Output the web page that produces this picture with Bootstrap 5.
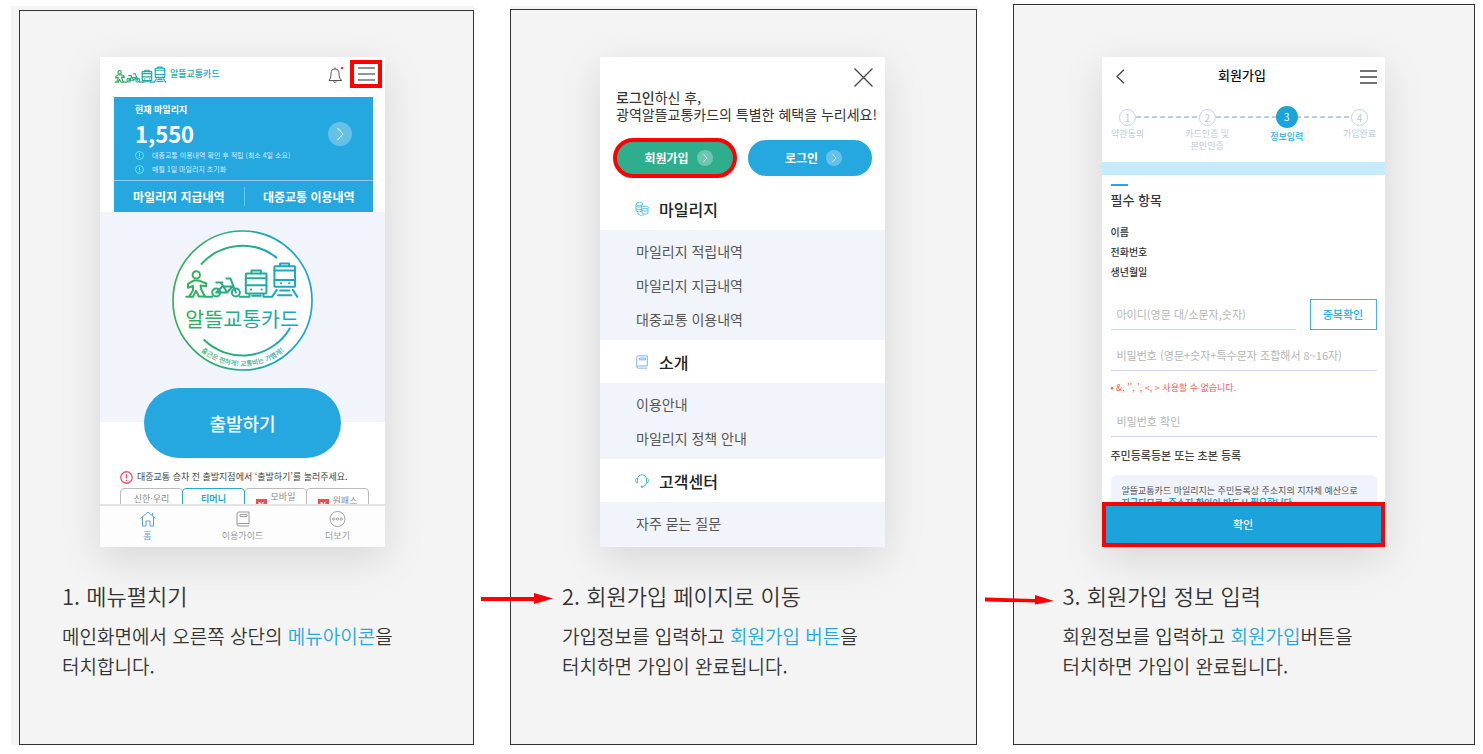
<!DOCTYPE html>
<html lang="ko">
<head>
<meta charset="utf-8">
<meta name="viewport" content="width=device-width, initial-scale=1">
<title>알뜰교통카드 회원가입 안내</title>
<link rel="stylesheet" href="https://cdn.jsdelivr.net/npm/bootstrap@5.3.0/dist/css/bootstrap.min.css">
<style>
:root{--sky:#25a7e0;--hot:#f00;--mist:#f1f4fa}
body{font-family:"Noto Sans CJK KR","Noto Sans",sans-serif;color:#333;background:#fff}
button,input{font-family:inherit}
a{text-decoration:none}
.guide{display:grid;grid-template-columns:463fr 467fr 462fr;gap:36px;padding:6px 8px 8px 11px}
.step-panel{position:relative;background:#f4f4f4;padding:51px 0 64px}
.step-panel::before{content:"";position:absolute;inset:3px 0 0;border:1px solid #333;pointer-events:none}
.step-panel.first::before{left:8px;top:4px}
.step-panel.last::before{top:-2px}
.step-panel + .step-panel{padding-right:2px}
.step-body{width:361px;max-width:100%}
.phone{width:285px;height:490px;background:#fff;overflow:hidden;box-shadow:0 12px 40px rgba(0,0,0,.12)}
.phone.form-screen{width:283px}
.phone button{border:0;padding:0;background:none;line-height:1}
.step-title{font-size:22px;line-height:33px;font-weight:350;margin:32px 0 9px}
.step-text{font-size:19px;line-height:30px;font-weight:350;margin:0;white-space:nowrap}
.step-text a{color:var(--sky)}
.flow-arrow{position:absolute;left:-29px;top:586px;z-index:2}
/* home screen */
.home-head{height:40px;padding:0 3px 0 14px}
.home-head .hot-box{border:4px solid var(--hot);width:32px;height:28px;margin:0 0 6px 6px}
.home-head .bell{margin-bottom:6px}
.brand{margin-bottom:4px}
.point-card{background:var(--sky);color:#fff;margin:0 12px 0 14px}
.point-main{padding:5px 21px 6px;height:84px;border-bottom:1px solid #8fd0ef}
.point-main h3{font-size:9px;line-height:16px;font-weight:700;margin:0}
.point-main strong{font-size:22px;line-height:30px;display:block}
.point-main li{font-size:7px;line-height:14px;color:#d2eefb;white-space:nowrap}
.point-links{height:31px}
.point-links a{color:#fff;font-size:12px;font-weight:700;line-height:19px}
.point-links a + a{border-left:1px solid #6cc3ea}
.hero{background:var(--mist);height:210px;padding-top:18px}
.depart{width:197px;height:70px;margin-top:-34px}
.phone .depart{background:var(--sky);border-radius:35px;color:#fff;font-size:18px;font-weight:500}
.notice{font-size:9px;line-height:14px;color:#444;margin:12px 0 4px 20px}
.ways{margin:0 16px 0 20px;height:16px}
.phone .ways button{border:1px solid #bbb;border-radius:4px 4px 0 0;font-size:9px;line-height:12px;color:#888;height:32px;padding-top:2px;margin-right:-1px;width:63px}
.phone .ways button.on{border:1px solid var(--sky);color:var(--sky);font-weight:700;position:relative}
.n-mark{background:#e95050;color:#fff;font-size:8px;line-height:11px;width:11px;font-weight:700;text-align:center}
.tabbar{height:43px;border-top:2px solid #e4e4e4;background:#fdfdfd;position:relative}
.tabbar a{font-size:9px;line-height:13px;color:#9a9a9a;padding-top:5px}
.tabbar svg{margin-bottom:2px}
.tabbar a.on{color:#5b9bea}
/* menu screen */
.menu-top{height:130px;padding:11px 12px 9px 16px}
.menu-top p{font-size:14px;line-height:17px;margin:2px 0 15px;white-space:nowrap}
.menu-top b{font-weight:500}
.phone .pill{width:124px;height:36px;border-radius:20px;color:#fff;font-size:12px;font-weight:700;background:var(--sky);padding-left:7px}
.phone .pill.join{height:40px;background:#2fae8e;border:4px solid var(--hot)}
.pills{margin:0 1px 0 -3px}
.group-head{height:43px;padding-left:35px;font-size:16px;font-weight:500;line-height:24px;margin:0;gap:10px;color:#222}
.group-list{background:var(--mist);padding:4px 36px}
.group-list.tail{padding-bottom:8px}
.group-list a{display:block;font-size:14px;line-height:34px;color:#555}
/* form screen */
.form-head{height:36px;padding:0 8px 0 14px}
.form-head h3{font-size:13px;font-weight:500;margin:0;color:#111}
.steps{position:relative;height:69px;padding:13px 7px 0 8px;font-size:9px;line-height:12px;color:#b9c9e2;text-align:center}
.steps::before{content:"";position:absolute;left:34px;right:34px;top:23px;height:2px;background:repeating-linear-gradient(90deg,#bccce6 0 5px,transparent 5px 8px)}
.steps li{position:relative;width:36px;white-space:nowrap}
.steps li.wide{width:50px}
.steps i{display:block;width:17px;height:17px;border:1px solid #c5d3ea;border-radius:50%;background:#fff;margin:3px auto 2px;font-style:normal;line-height:15px;font-size:10px}
.steps .on{color:#25b0ee;font-weight:500}
.steps .on i{width:22px;height:22px;border:0;background:#1da3dc;color:#fff;line-height:21px;margin:0 auto 3px;font-weight:400}
.band{height:13px;background:#c5ebff}
.form-body{padding:9px 8px 0 9px;height:327px;overflow:hidden}
.form-body h4{font-size:13px;line-height:20px;font-weight:500;margin:0 0 12px;color:#334}
.form-body h4::before{content:"";display:block;width:17px;height:2px;background:#25a7e0;margin-bottom:4px}
.form-body h5{font-size:11px;line-height:16px;font-weight:500;margin:10px 0 12px;color:#444}
.facts{font-size:10px;line-height:20px;font-weight:500;margin:0 0 17px}
.id-row{gap:14px;margin-bottom:10px}
.line-input{border:0;border-bottom:1px solid #cbd7ec;font-size:11px;height:31px;padding:0 6px;width:100%;background:none;border-radius:0}
.line-input::placeholder{color:#b5b5b5;opacity:1}
.phone .check{border:1px solid #3cb4ea;color:#25b0ee;font-size:11px;font-weight:500;width:67px;height:31px}
.warn{font-size:9px;line-height:14px;color:#ff5757;margin:10px 0 11px}
.tip{background:#f0f3fb;border-radius:5px;padding:10px 11px;font-size:9px;line-height:12px;color:#555;white-space:nowrap}
.tip b{color:#1da3dc}
.phone .confirm{background:#1da3dc;border:4px solid var(--hot);height:45px;color:#fff;font-size:11px;font-weight:500}
</style>
</head>
<body>
<svg width="0" height="0" class="position-absolute" aria-hidden="true">
  <defs>
    <linearGradient id="fade" gradientUnits="userSpaceOnUse" x1="40" y1="0" x2="460" y2="0"><stop offset="0" stop-color="#35b34a"/><stop offset=".5" stop-color="#25ab8e"/><stop offset="1" stop-color="#17a3e6"/></linearGradient>
    <linearGradient id="fade-s" gradientUnits="userSpaceOnUse" x1="75" y1="0" x2="390" y2="0"><stop offset="0" stop-color="#35b34a"/><stop offset=".5" stop-color="#25ab8e"/><stop offset="1" stop-color="#17a3e6"/></linearGradient>
    <g id="vehicles" fill="none" stroke-linecap="round" stroke-linejoin="round">
      <circle cx="112" cy="164" r="11"/>
      <path d="M82 230H102L111 212L120 229H138L127 208L125 196L142 198V190L121 181H104L87 191V203L102 197V210L91 229"/>
      <path d="M138 230H160"/>
      <circle cx="172" cy="217" r="12"/><circle cx="231" cy="217" r="12"/>
      <path d="M172 217L190 199H221L205 217H172M205 217L186 187M172 187H190M203 175H215L231 217M243 230H272V222M314 222V230H340L354 209"/>
      <rect x="261" y="160" width="62" height="60" rx="2"/><path d="M261 174H323M261 195H323M278 160V151H306V160M280 227H306"/>
      <rect x="347" y="138" width="62" height="62" rx="2"/><path d="M347 151H409M347 179H409M364 138V130H391V138M364 211H392M358 225H398M402 209L416 230"/>
      <path d="M276 208H277M308 208H309M366 189H367M391 189H392"/>
    </g>
    <symbol id="go" viewBox="0 0 24 24"><circle cx="12" cy="12" r="12" fill="#fff" fill-opacity=".3"/><path d="M9.500 6L15 12L9.500 18" fill="none" stroke="#fff" stroke-width="1"/></symbol>
    <symbol id="bars" viewBox="0 0 17 14"><path d="M0 1H17M0 7H17M0 13H17" stroke="currentColor" stroke-width="1.500"/></symbol>
    <symbol id="bang" viewBox="0 0 12 12"><circle cx="6" cy="6" r="5.300" fill="none" stroke="currentColor" stroke-width="1.200"/><path d="M6 3V7M6 8V9.200" stroke="currentColor" stroke-width="1.300"/></symbol>
    <symbol id="book" viewBox="0 0 14 16"><path d="M13 12.500V1H3Q1 1 1 3V13.500Q1 15 3 15H13M1 13.500Q1 12.500 3 12.500H13M4 3.500H11V5.500H4Z" fill="none" stroke="currentColor" stroke-width="1"/></symbol>
  </defs>
</svg>

<main class="guide">
  <section class="step-panel first">
    <div class="step-body mx-auto">
      <div class="phone mx-auto d-flex flex-column">
        <header class="home-head d-flex align-items-center flex-shrink-0">
          <svg class="brand me-auto" width="107" height="20" viewBox="72 45 321 60" role="img" aria-label="알뜰교통카드">
            <g stroke="url(#fade)" stroke-width="8" transform="translate(38 -8) scale(.455)"><use href="#vehicles"/></g>
            <text x="240" y="82" font-size="27" font-weight="500" fill="url(#fade-s)">알뜰교통카드</text>
          </svg>
          <button class="bell" type="button" aria-label="알림">
            <svg width="16" height="18" viewBox="0 0 16 18" fill="none" stroke="#555"><path d="M1 14.500Q3 12 3 9V7.500Q3 3 7 3Q11 3 11 7.500V9Q11 12 13.500 14.500ZM5.500 15.500Q7 17.500 8.500 15.500M7 3V1.500"/><circle cx="14" cy="2" r="1.300" fill="#f33" stroke="none"/></svg>
          </button>
          <button class="hot-box text-secondary d-flex align-items-center justify-content-center" type="button" aria-label="메뉴"><svg width="17" height="14"><use href="#bars"/></svg></button>
        </header>
        <div class="point-card flex-shrink-0">
          <div class="point-main d-flex justify-content-between align-items-start">
            <div>
              <h3>현재 마일리지</h3>
              <strong>1,550</strong>
              <ul class="list-unstyled m-0">
                <li class="d-flex align-items-center gap-2"><svg width="9" height="9" color="#5ff0e0"><use href="#bang"/></svg>대중교통 이용내역 확인 후 적립 (최소 4일 소요)</li>
                <li class="d-flex align-items-center gap-2"><svg width="9" height="9" color="#5ff0e0"><use href="#bang"/></svg>매월 1일 마일리지 초기화</li>
              </ul>
            </div>
            <button class="mt-3" type="button" aria-label="마일리지 상세"><svg class="mt-1" width="24" height="24"><use href="#go"/></svg></button>
          </div>
          <div class="point-links d-flex align-items-center text-center"><a href="#" class="col-6">마일리지 지급내역</a><a href="#" class="col-6">대중교통 이용내역</a></div>
        </div>
        <div class="hero flex-shrink-0 text-center">
          <svg width="141" height="141" viewBox="39 29 424 424" role="img" aria-label="알뜰교통카드 출근은 편하게! 교통비는 가볍게!">
            <g fill="none" stroke="url(#fade)" stroke-width="6" stroke-linecap="round">
              <circle cx="251" cy="241" r="209" fill="#fff" stroke-width="5"/>
              <path d="M128 131A165 165 0 0 1 353 112M136 360A165 165 0 0 0 393 325"/>
              <use href="#vehicles"/>
            </g>
            <path id="rim" d="M54 241A197 197 0 0 0 448 241" fill="none"/>
            <text x="250" y="320" text-anchor="middle" font-size="62" font-weight="400" fill="url(#fade)">알뜰교통카드</text>
            <text font-size="20" font-weight="500" fill="url(#fade)" text-anchor="middle"><textPath href="#rim" startOffset="50%">출근은 편하게! 교통비는 가볍게!</textPath></text>
          </svg>
        </div>
        <button class="depart mx-auto flex-shrink-0" type="button">출발하기</button>
        <p class="notice d-flex align-items-center flex-shrink-0 text-nowrap"><svg width="13" height="13" color="#f5516c"><use href="#bang"/></svg><span class="ps-1">대중교통 승차 전 출발지점에서 ‘출발하기’를 눌러주세요.</span></p>
        <div class="ways d-flex flex-shrink-0">
          <button type="button">신한·우리<br>하나카드</button>
          <button type="button" class="on">티머니<br>캐시비이</button>
          <button type="button" class="d-flex justify-content-center gap-1"><span class="n-mark mt-2">N</span><span>모바일<br>캐시비</span></button>
          <button type="button" class="d-flex justify-content-center gap-1"><span class="n-mark mt-2">N</span><span class="mt-1">원패스</span></button>
        </div>
        <nav class="tabbar d-flex text-center mt-auto flex-shrink-0">
          <a href="#" class="col-4 on"><svg class="d-block mx-auto" width="16" height="16" viewBox="0 0 16 16" fill="none" stroke="currentColor"><path d="M.5 7.500L8 1L15.500 7.500M2.500 6V15H6V10H10V15H13.500V6M12.500 4.500V2"/></svg>홈</a>
          <a href="#" class="col-4"><svg class="d-block mx-auto" width="14" height="16"><use href="#book"/></svg>이용가이드</a>
          <a href="#" class="col-4"><svg class="d-block mx-auto" width="17" height="16" viewBox="0 0 17 17" fill="none" stroke="currentColor"><circle cx="8.500" cy="8.500" r="8"/><circle cx="4.500" cy="8.500" r="1.200"/><circle cx="8.500" cy="8.500" r="1.200"/><circle cx="12.500" cy="8.500" r="1.200"/></svg>더보기</a>
        </nav>
      </div>
      <h2 class="step-title">1. 메뉴펼치기</h2>
      <p class="step-text">메인화면에서 오른쪽 상단의 <a href="#">메뉴아이콘</a>을<br>터치합니다.</p>
    </div>
  </section>

  <section class="step-panel">
    <svg class="flow-arrow" width="74" height="14" viewBox="0 0 74 14" fill="#f00" aria-hidden="true"><path d="M0 5H53V1L72 6.500L53 12V9H0Z"/></svg>
    <div class="step-body mx-auto">
      <div class="phone mx-auto">
        <div class="menu-top">
          <button type="button" aria-label="닫기" class="d-block ms-auto"><svg class="d-block" width="19" height="19" viewBox="0 0 19 19" stroke="#444" stroke-width="1.300"><path d="M.5 .5L18.500 18.500M18.500 .5L.5 18.500"/></svg></button>
          <p><b>로그인</b>하신 후,<br>광역알뜰교통카드의 특별한 혜택을 누리세요!</p>
          <div class="pills d-flex justify-content-between align-items-center">
            <button type="button" class="pill join d-flex align-items-center justify-content-center gap-2">회원가입<svg width="16" height="16"><use href="#go"/></svg></button>
            <button type="button" class="pill d-flex align-items-center justify-content-center gap-2">로그인<svg width="16" height="16"><use href="#go"/></svg></button>
          </div>
        </div>
        <h3 class="group-head d-flex align-items-center"><svg width="14" height="14" viewBox="0 0 14 14" fill="#fff" stroke="#4dbbe8" stroke-width=".9"><path d="M1 2V9Q4 11 7 9V2"/><ellipse cx="4.500" cy="2" rx="3.500" ry="1.500"/><path d="M1 4.500Q4 6 7 4.500M1 7Q4 8.500 7 7"/><path d="M7 5.500V11.500Q10 13 13 11.500V5.500"/><ellipse cx="10" cy="5.500" rx="3.300" ry="1.300"/><path d="M7 8.500Q10 10 13 8.500M3 9V12Q5 14 9 13"/></svg>마일리지</h3>
        <nav class="group-list"><a href="#">마일리지 적립내역</a><a href="#">마일리지 지급내역</a><a href="#">대중교통 이용내역</a></nav>
        <h3 class="group-head d-flex align-items-center"><svg width="14" height="14" color="#6ea5f0"><use href="#book"/></svg>소개</h3>
        <nav class="group-list"><a href="#">이용안내</a><a href="#">마일리지 정책 안내</a></nav>
        <h3 class="group-head d-flex align-items-center"><svg width="14" height="14" viewBox="0 0 14 14" fill="none" stroke="#4dbbe8"><path d="M2.500 5Q3 .8 7 .8Q11 .8 11.500 5M2.500 4.500H1.500Q.5 5 .5 6.500Q.5 9 2.500 9ZM11.500 4.500H12.500Q13.500 5 13.500 6.500Q13.500 9 11.500 9ZM11.500 9Q11 12 8 12.500"/><circle cx="7" cy="12.700" r=".8" fill="#4dbbe8"/></svg>고객센터</h3>
        <nav class="group-list tail"><a href="#">자주 묻는 질문</a></nav>
      </div>
      <h2 class="step-title">2. 회원가입 페이지로 이동</h2>
      <p class="step-text">가입정보를 입력하고 <a href="#">회원가입 버튼</a>을<br>터치하면 가입이 완료됩니다.</p>
    </div>
  </section>

  <section class="step-panel last">
    <svg class="flow-arrow" width="74" height="16" viewBox="0 0 74 16" fill="#f00" aria-hidden="true"><path d="M1 5.500L51 7V3L70 9L51 12.500V10.500L1 9.500Z"/></svg>
    <div class="step-body mx-auto">
      <form class="phone form-screen mx-auto d-flex flex-column">
        <header class="form-head d-flex align-items-center justify-content-between flex-shrink-0">
          <button type="button" aria-label="뒤로"><svg width="9" height="15" viewBox="0 0 9 15" fill="none" stroke="#444" stroke-width="1.300"><path d="M8 .8L1 7.500L8 14.200"/></svg></button>
          <h3>회원가입</h3>
          <button type="button" aria-label="메뉴"><svg width="17" height="14" color="#444"><use href="#bars"/></svg></button>
        </header>
        <ol class="steps list-unstyled d-flex justify-content-between m-0 flex-shrink-0">
          <li><i>1</i>약관동의</li><li class="wide"><i>2</i>카드인증 및<br>본인인증</li><li class="on"><i>3</i>정보입력</li><li><i>4</i>가입완료</li>
        </ol>
        <div class="band flex-shrink-0"></div>
        <div class="form-body flex-shrink-0">
          <h4>필수 항목</h4>
          <div class="facts">이름<br>전화번호<br>생년월일</div>
          <div class="id-row d-flex">
            <input class="line-input" type="text" aria-label="아이디" placeholder="아이디(영문 대/소문자,숫자)">
            <button type="button" class="check flex-shrink-0">중복확인</button>
          </div>
          <input class="line-input d-block" type="password" aria-label="비밀번호" placeholder="비밀번호 (영문+숫자+특수문자 조합해서 8~16자)">
          <p class="warn">• &amp;, '', ', &lt;, &gt; 사용할 수 없습니다.</p>
          <input class="line-input d-block" type="password" aria-label="비밀번호 확인" placeholder="비밀번호 확인">
          <h5>주민등록등본 또는 초본 등록</h5>
          <div class="tip">알뜰교통카드 마일리지는 주민등록상 주소지의 지자체 예산으로<br><b>지급되므로, 주소지 확인이 반드시 필요합니다.</b></div>
        </div>
        <button type="submit" class="confirm w-100 mt-auto flex-shrink-0">확인</button>
      </form>
      <h2 class="step-title">3. 회원가입 정보 입력</h2>
      <p class="step-text">회원정보를 입력하고 <a href="#">회원가입</a>버튼을<br>터치하면 가입이 완료됩니다.</p>
    </div>
  </section>
</main>
<script src="https://cdn.jsdelivr.net/npm/bootstrap@5.3.0/dist/js/bootstrap.bundle.min.js"></script>
</body>
</html>
